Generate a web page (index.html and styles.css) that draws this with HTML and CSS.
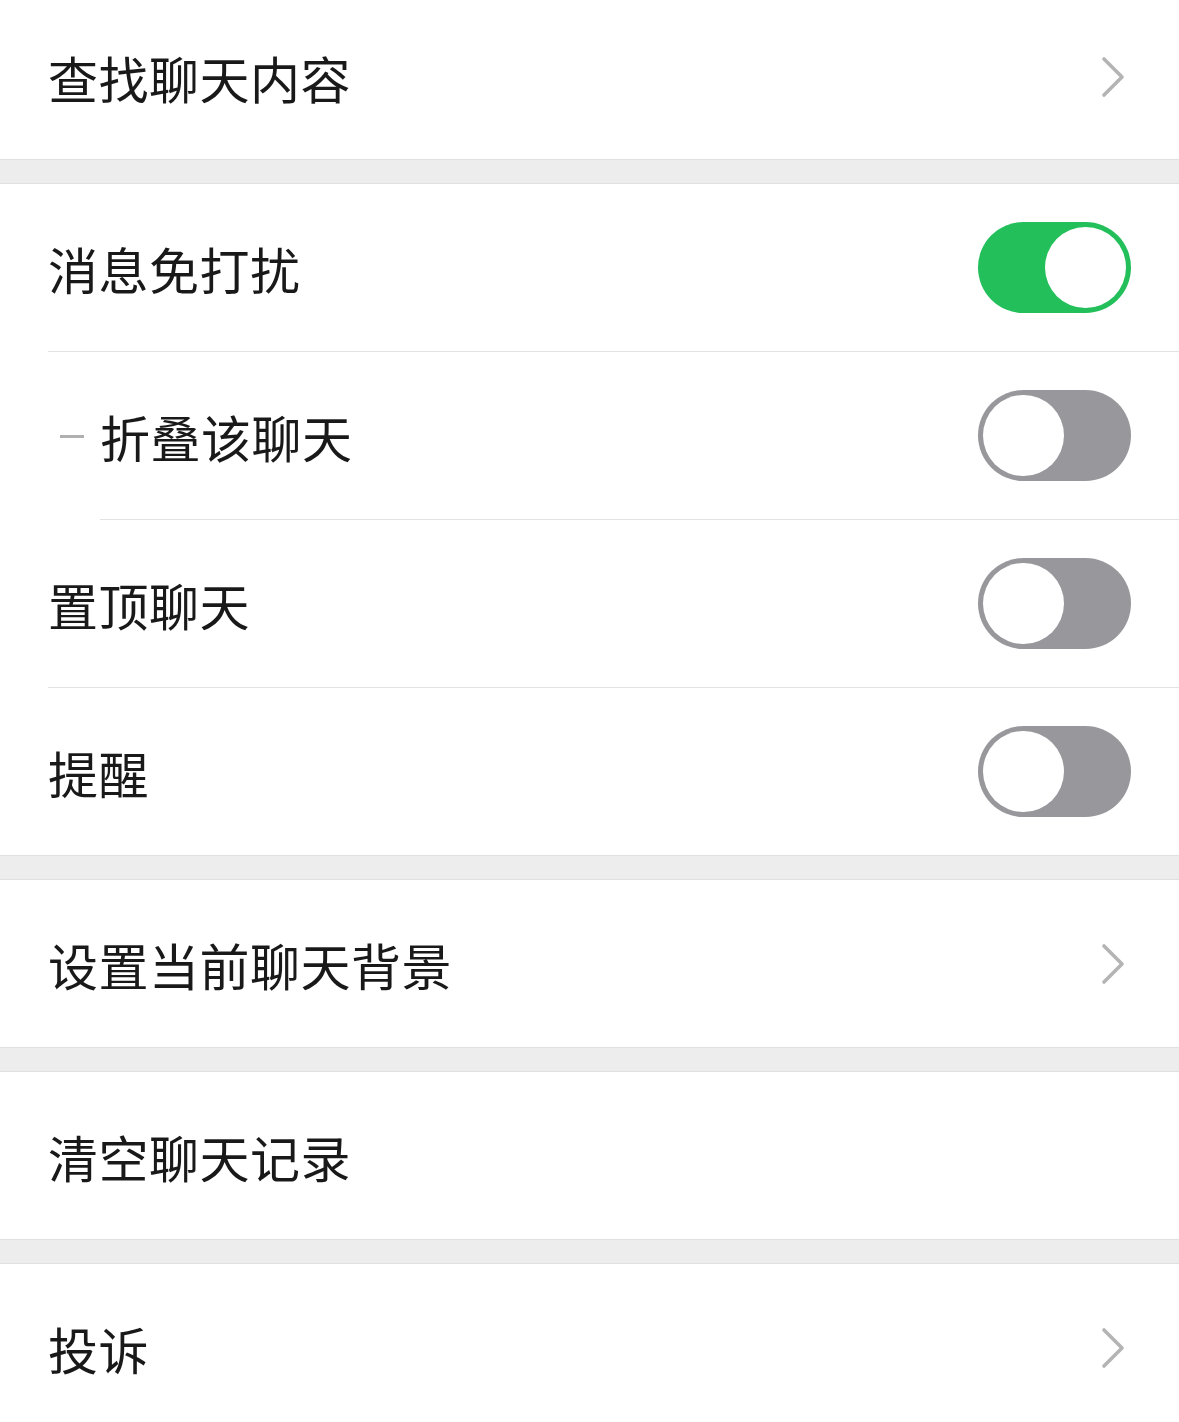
FILE: index.html
```html
<!DOCTYPE html>
<html lang="zh-CN">
<head>
    <meta charset="UTF-8">
    <meta name="viewport" content="width=device-width, initial-scale=1.0">
    <title>聊天信息</title>
    <link rel="stylesheet" href="styles.css">
</head>
<body>
    <div class="group">
        <div class="row row-first">
            <div class="row-body">
                <span class="label">查找聊天内容</span>
                <svg class="chevron" width="24" height="42" viewBox="0 0 24 42"><polyline points="3,3 21,21 3,39" fill="none" stroke="#b4b4b4" stroke-width="3.6" stroke-linecap="round" stroke-linejoin="round"/></svg>
            </div>
        </div>
    </div>

    <div class="gap"></div>

    <div class="group">
        <div class="row">
            <div class="row-body lined">
                <span class="label">消息免打扰</span>
                <div class="switch on"><span class="knob"></span></div>
            </div>
        </div>
        <div class="row">
            <span class="dash"></span>
            <div class="row-body lined">
                <span class="label">折叠该聊天</span>
                <div class="switch"><span class="knob"></span></div>
            </div>
        </div>
        <div class="row">
            <div class="row-body lined">
                <span class="label">置顶聊天</span>
                <div class="switch"><span class="knob"></span></div>
            </div>
        </div>
        <div class="row">
            <div class="row-body">
                <span class="label">提醒</span>
                <div class="switch"><span class="knob"></span></div>
            </div>
        </div>
    </div>

    <div class="gap"></div>

    <div class="group">
        <div class="row">
            <div class="row-body">
                <span class="label">设置当前聊天背景</span>
                <svg class="chevron" width="24" height="42" viewBox="0 0 24 42"><polyline points="3,3 21,21 3,39" fill="none" stroke="#b4b4b4" stroke-width="3.6" stroke-linecap="round" stroke-linejoin="round"/></svg>
            </div>
        </div>
    </div>

    <div class="gap"></div>

    <div class="group">
        <div class="row">
            <div class="row-body">
                <span class="label">清空聊天记录</span>
            </div>
        </div>
    </div>

    <div class="gap"></div>

    <div class="group">
        <div class="row">
            <div class="row-body">
                <span class="label">投诉</span>
                <svg class="chevron" width="24" height="42" viewBox="0 0 24 42"><polyline points="3,3 21,21 3,39" fill="none" stroke="#b4b4b4" stroke-width="3.6" stroke-linecap="round" stroke-linejoin="round"/></svg>
            </div>
        </div>
    </div>
</body>
</html>
```

FILE: styles.css
```css
body {
    margin: 0;
    padding: 0;
    background-color: #ededed;
    font-family: "Noto Sans CJK SC", "Noto Sans", sans-serif;
    color: #191919;
    height: 1422px;
    overflow: hidden;
}

.group {
    background-color: #ffffff;
}

.gap {
    height: 23px;
    background-color: #ededed;
    border-top: 1px solid #e0e0e0;
    border-bottom: 1px solid #e0e0e0;
}

.row {
    display: flex;
    align-items: stretch;
    padding-left: 48px;
}

.row-body {
    flex: 1;
    display: flex;
    align-items: center;
    justify-content: space-between;
    height: 167px;
    padding-right: 48px;
}

.row-first .row-body {
    height: 154px;
    padding-bottom: 5px;
}

.row-body.lined {
    border-bottom: 1px solid #e3e3e3;
}

.label {
    font-size: 50px;
    line-height: 1;
    letter-spacing: 0.5px;
}

.dash {
    align-self: center;
    width: 24px;
    height: 3px;
    background-color: #b0b0b0;
    margin-left: 12px;
    margin-right: 16px;
}

.chevron {
    margin-right: 6px;
}

.switch {
    box-sizing: border-box;
    width: 153px;
    height: 91px;
    border-radius: 46px;
    padding: 5px;
    display: flex;
    align-items: center;
    justify-content: flex-start;
    background-color: #98979c;
}

.switch.on {
    background-color: #22bf5a;
    justify-content: flex-end;
}

.knob {
    width: 81px;
    height: 81px;
    border-radius: 50%;
    background-color: #ffffff;
}
```
